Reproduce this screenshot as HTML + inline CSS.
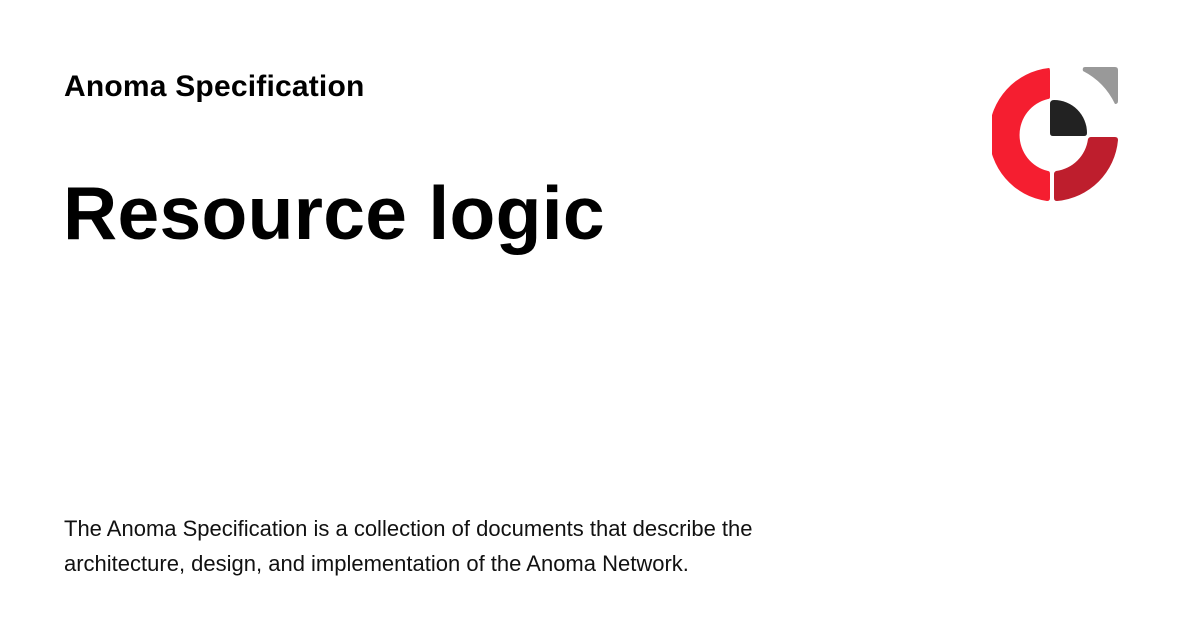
<!DOCTYPE html>
<html><head><meta charset="utf-8"><style>
html,body{margin:0;padding:0;background:#fff;width:1200px;height:630px;overflow:hidden;position:relative;font-family:"Liberation Sans",sans-serif;color:#000}
.site{position:absolute;left:64px;top:70px;font-size:30px;font-weight:bold;letter-spacing:0.2px}
.title{position:absolute;left:63px;top:170px;font-size:75px;font-weight:bold;letter-spacing:0.3px}
.desc{position:absolute;left:64px;top:511px;font-size:22px;line-height:35px;color:#111}
svg{position:absolute;left:0;top:0}
</style></head><body>
<div class="site">Anoma Specification</div>
<div class="title">Resource logic</div>
<div class="desc">The Anoma Specification is a collection of documents that describe the<br>architecture, design, and implementation of the Anoma Network.</div>
<svg width="1200" height="630">
<defs><clipPath id="c"><rect x="992" y="0" width="200" height="630"/></clipPath></defs>
<path clip-path="url(#c)" d="M1049,68 Q1050,68 1050,72 L1050,97 Q1050,99 1048,99 A37,37 0 0 0 1048,171 Q1050,171 1050,174 L1050,198 Q1050,201 1047,201 A67,67 0 0 1 1049,68 Z" fill="#f51e30"/>
<path d="M1054,198 L1054,174 Q1054,172 1056,171 A37,37 0 0 0 1088,139 Q1089,137 1091,137 L1115,137 Q1118,137 1118,140 A67,67 0 0 1 1057,201 Q1054,201 1054,198 Z" fill="#be1e2d"/>
<path d="M1050,104 Q1050,100 1054,100 A33,33 0 0 1 1087,133 Q1087,136 1084,136 L1053,136 Q1050,136 1050,133 Z" fill="#222"/>
<path d="M1085,67 L1115,67 Q1118,67 1118,70 L1118,101 Q1118,104 1115,104 A72,72 0 0 0 1083,71 Q1082,67 1085,67 Z" fill="#999"/>
</svg>
</body></html>
